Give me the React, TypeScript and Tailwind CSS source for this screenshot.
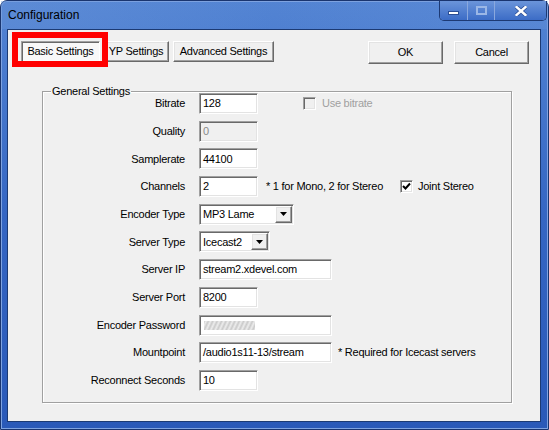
import React from 'react';

// classic win32 3d edges
const sunken =
  'border border-t-[#a0a0a0] border-l-[#a0a0a0] border-r-white border-b-white shadow-[inset_1px_1px_0_#696969,inset_-1px_-1px_0_#e3e3e3]';
const raised =
  'border border-t-white border-l-white border-r-[#696969] border-b-[#696969] shadow-[inset_-1px_-1px_0_#a0a0a0,inset_1px_1px_0_#e3e3e3] bg-[#f0f0f0]';

function Field({ w, value, disabled }: { w: string; value: string; disabled?: boolean }) {
  return (
    <div
      className={`${sunken} ${w} h-[21px] flex items-center pl-[3px] ${
        disabled ? 'bg-[#f0f0f0] text-[#8a8a8a]' : 'bg-white text-black'
      }`}
    >
      {value}
    </div>
  );
}

function Combo({ w, value }: { w: string; value: string }) {
  return (
    <div className={`${sunken} ${w} h-[21px] flex items-center bg-white pl-[3px] pr-[1px]`}>
      <span className="flex-1">{value}</span>
      <div className={`${raised} w-[17px] h-[17px] flex items-center justify-center`}>
        <svg width="7" height="4" viewBox="0 0 7 4">
          <polygon points="0,0 7,0 3.5,4" fill="#000" />
        </svg>
      </div>
    </div>
  );
}

function Check({ checked, disabled }: { checked?: boolean; disabled?: boolean }) {
  return (
    <div
      className={`${sunken} w-[13px] h-[13px] flex items-center justify-center ${
        disabled ? 'bg-[#f0f0f0]' : 'bg-white'
      }`}
    >
      {checked && (
        <svg width="9" height="9" viewBox="0 0 9 9">
          <polyline points="1,4 3.5,6.5 8,1.5" fill="none" stroke="#000" strokeWidth="2" />
        </svg>
      )}
    </div>
  );
}

function Row({ label, children }: { label: string; children: React.ReactNode }) {
  return (
    <div className="flex items-center h-[21px]">
      <div className="w-[143px] text-right pr-[1px]">{label}</div>
      <div className="ml-[13px] flex items-center">{children}</div>
    </div>
  );
}

export default function App() {
  return (
    <div className="w-[549px] h-[430px] font-['Liberation_Sans',Arial,sans-serif] text-[11px] tracking-[-0.25px] text-black">
      <div className="w-[549px] h-[430px] rounded-t-[7px] border border-[#1a356f] bg-gradient-to-b from-[#5384d3] via-[#3566c3] to-[#2a59b8] shadow-[inset_0_0_0_1px_#7fa3e0] flex flex-col">
        {/* title bar */}
        <div className="h-[28px] flex items-start bg-gradient-to-r from-[#6a96da]/40 via-transparent to-[#6a96da]/30">
          <div className="pl-[7px] pt-[7px] text-[12px] leading-[15px] tracking-normal text-black">Configuration</div>
          <div className="ml-auto mr-[1px] flex h-[20px] rounded-b-[5px] border border-t-0 border-[#1d3a74] overflow-hidden shadow-[inset_0_-1px_0_#8eaee4]">
            <div className="w-[28px] h-full flex items-center justify-center border-r border-[#8aa8dd] bg-gradient-to-b from-[#6b95da] to-[#3c6cc6]">
              <div className="w-[11px] h-[4px] mt-[5px] bg-white border border-[#2b4e95]" />
            </div>
            <div className="w-[27px] h-full flex items-center justify-center border-r border-[#8aa8dd] bg-gradient-to-b from-[#6b95da] to-[#3c6cc6]">
              <div className="w-[11px] h-[9px] border-2 border-[#9bb7e6] bg-transparent" />
            </div>
            <div className="w-[51px] h-full flex items-center justify-center bg-gradient-to-b from-[#6b95da] to-[#3c6cc6]">
              <svg width="12" height="10" viewBox="0 0 12 10">
                <path d="M1.5 1 L10.5 9 M10.5 1 L1.5 9" stroke="#2b4e95" strokeWidth="4" strokeLinecap="square" />
                <path d="M1.5 1 L10.5 9 M10.5 1 L1.5 9" stroke="#fff" strokeWidth="2.4" strokeLinecap="square" />
              </svg>
            </div>
          </div>
        </div>

        {/* client area */}
        <div className="relative ml-[6px] w-[534px] h-[393px] bg-[#f0f0f0] border border-[#1c3a73]">
          <div className="flex items-start pt-[11px]">
            <div className="ml-[13px] w-[79px] h-[21px] flex items-center justify-center border border-t-[#a0a0a0] border-l-[#a0a0a0] border-r-white border-b-white shadow-[inset_1px_1px_0_#696969] bg-[#f8f8f8]">
              Basic Settings
            </div>
            <div className={`${raised} ml-[3px] w-[66px] h-[21px] flex items-center justify-center`}>YP Settings</div>
            <div className={`${raised} ml-[4px] w-[101px] h-[21px] flex items-center justify-center`}>
              Advanced Settings
            </div>
            <div className={`${raised} ml-[94px] w-[75px] h-[23px] flex items-center justify-center`}>OK</div>
            <div className={`${raised} ml-[11px] w-[75px] h-[23px] flex items-center justify-center`}>Cancel</div>
          </div>

          {/* highlight around the active tab */}
          <div className="absolute left-[4px] top-[2px] w-[96px] h-[35px] border-[6px] border-[#ff0000]" />

          {/* group box */}
          <div className="ml-[34px] mt-[27px] w-[470px] h-[312px] border border-[#a0a0a0] shadow-[inset_1px_1px_0_#fff,1px_1px_0_#fff] flex flex-col">
            <span className="self-start ml-[8px] -mt-[7px] -mb-[6px] px-[1px] leading-[13px] bg-[#f0f0f0]">
              General Settings
            </span>
            <div className="pt-[1px] flex flex-col gap-[6.7px]">
              <Row label="Bitrate">
                <Field w="w-[59px]" value="128" />
                <div className="ml-[45px]">
                  <Check disabled />
                </div>
                <span className="ml-[6px] text-[#a0a0a0]">Use bitrate</span>
              </Row>
              <Row label="Quality">
                <Field w="w-[59px]" value="0" disabled />
              </Row>
              <Row label="Samplerate">
                <Field w="w-[59px]" value="44100" />
              </Row>
              <Row label="Channels">
                <Field w="w-[59px]" value="2" />
                <span className="ml-[8px] w-[134px]">* 1 for Mono, 2 for Stereo</span>
                <Check checked />
                <span className="ml-[5px]">Joint Stereo</span>
              </Row>
              <Row label="Encoder Type">
                <Combo w="w-[95px]" value="MP3 Lame" />
              </Row>
              <Row label="Server Type">
                <Combo w="w-[71px]" value="Icecast2" />
              </Row>
              <Row label="Server IP">
                <Field w="w-[133px]" value="stream2.xdevel.com" />
              </Row>
              <Row label="Server Port">
                <Field w="w-[59px]" value="8200" />
              </Row>
              <Row label="Encoder Password">
                <div className={`${sunken} w-[133px] h-[21px] flex items-center bg-white pl-[4px]`}>
                  <div className="w-[51px] h-[9px] bg-[repeating-linear-gradient(115deg,#bdbdbd_0px,#e8e8e8_2px,#bdbdbd_4px)] opacity-80" />
                </div>
              </Row>
              <Row label="Mountpoint">
                <Field w="w-[133px]" value="/audio1s11-13/stream" />
                <span className="ml-[6px]">* Required for Icecast servers</span>
              </Row>
              <Row label="Reconnect Seconds">
                <Field w="w-[59px]" value="10" />
              </Row>
            </div>
          </div>
        </div>
      </div>
    </div>
  );
}
